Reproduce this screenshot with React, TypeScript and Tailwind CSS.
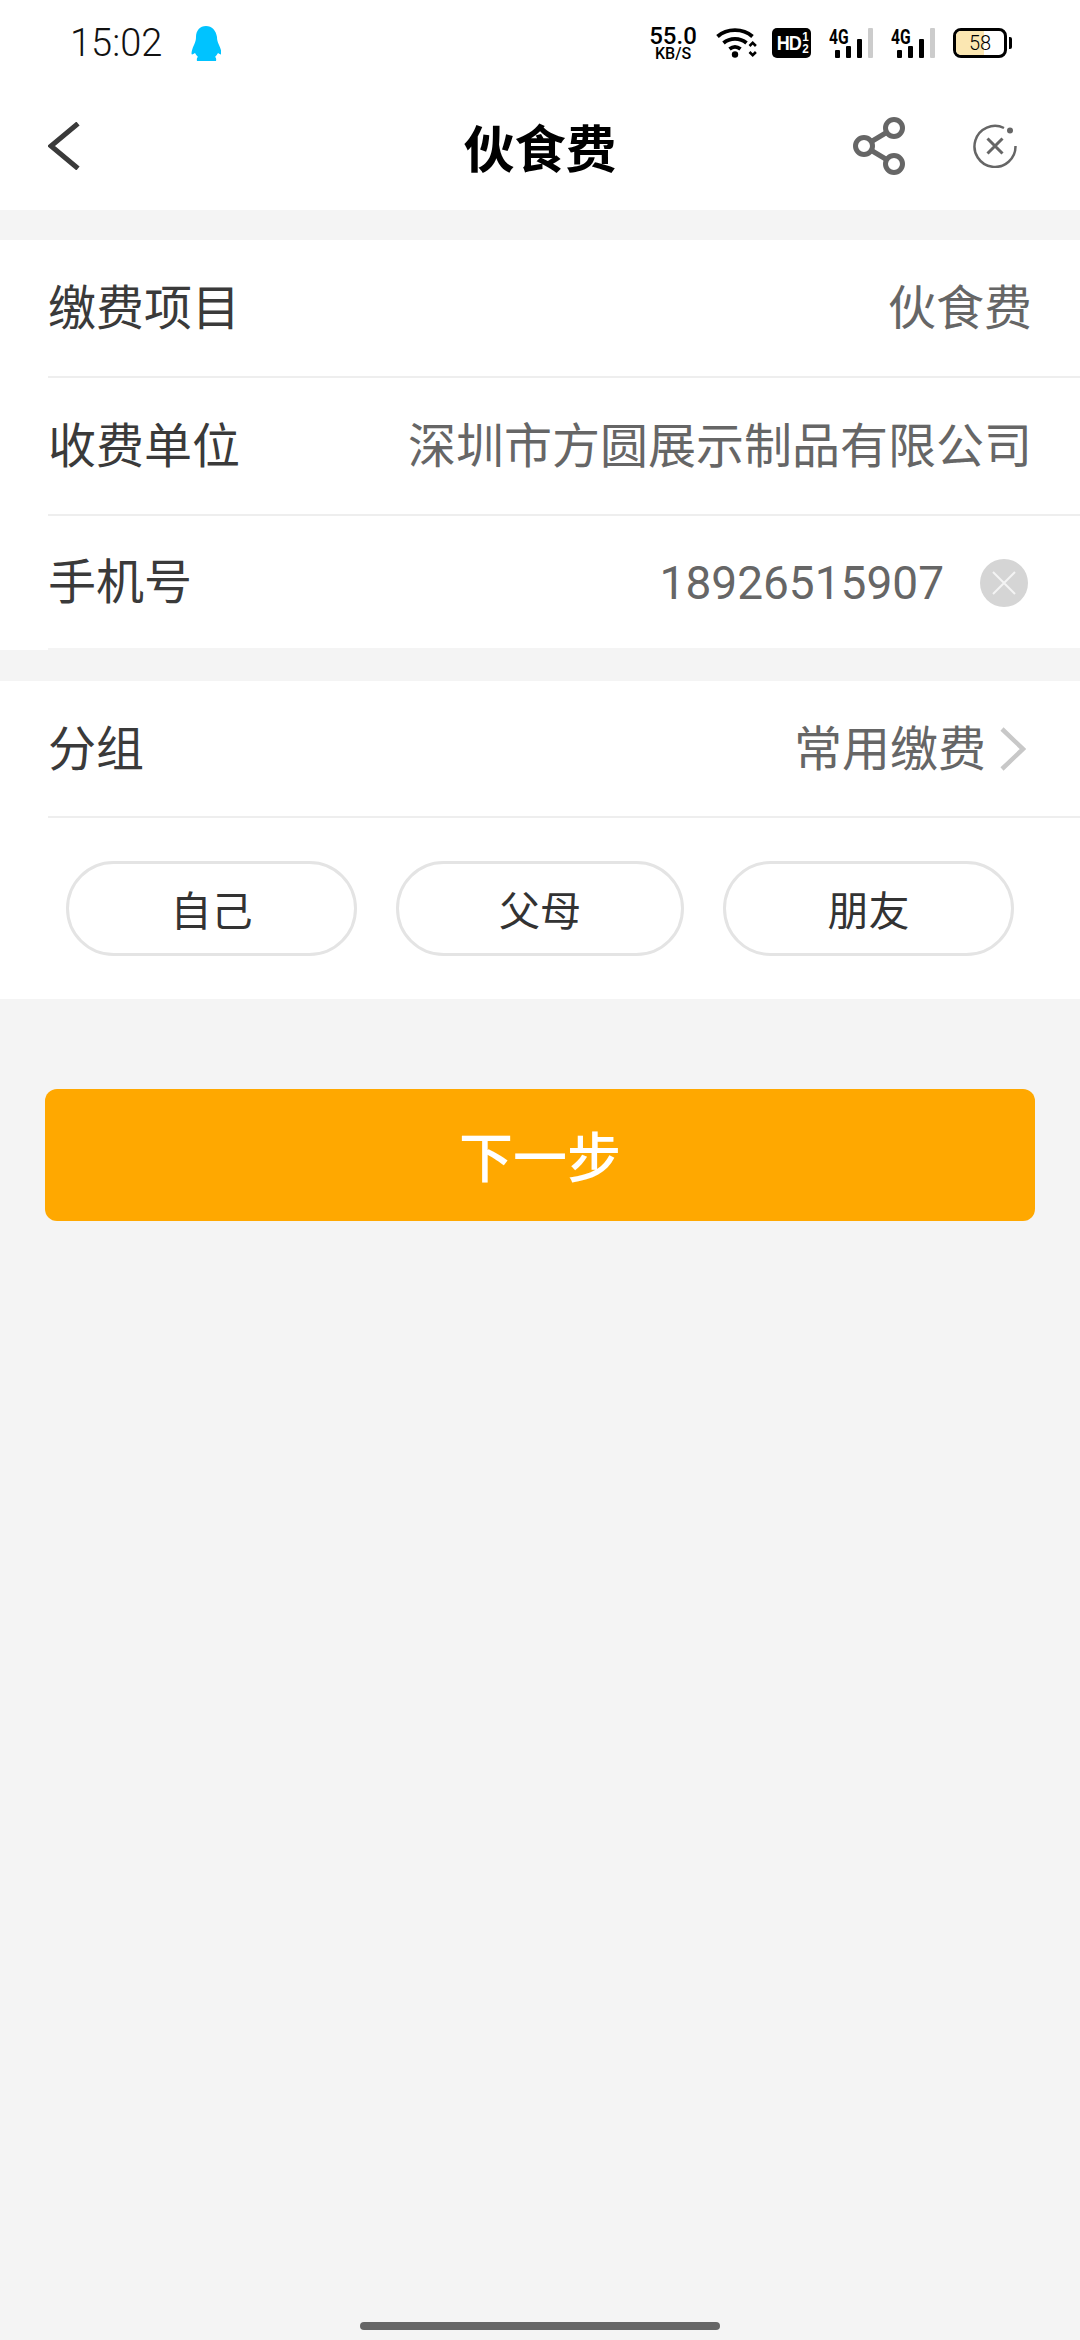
import React from 'react';

const FONT = "font-['Noto_Sans_CJK_SC','Noto_Sans',sans-serif]";

const Penguin = () => (
  <svg width="30" height="35" viewBox="0 0 30 35" fill="#00c3ff">
    <path d="M15 0C9 0 5 4.500 5 11c0 3-.5 4.500-2 8-1.500 3-2.500 6.500-2.500 8.500 0 1.500 1.500 1 3.500-.5.7 1.500 1.700 2.800 3 4-1 .5-1.500 2-1 4h19c.5-2 0-3.500-1-4 1.300-1.200 2.300-2.500 3-4 2 1.500 3.500 2 3.500.5 0-2-1-5.500-2.500-8.500-1.500-3.500-2-5-2-8C25 4.500 21 0 15 0z" />
  </svg>
);

const Wifi = () => (
  <svg width="42" height="32" viewBox="0 0 42 32" fill="none" stroke="#000" strokeWidth="3.800">
    <path d="M1.500 9.500C11 1 27 1 36.500 9.500" />
    <path d="M7.500 16C14 10.500 24 10.500 30.500 16" />
    <path d="M13.500 22c3.500-2.700 7.500-2.700 11 0" />
    <circle cx="19" cy="27.500" r="3.200" fill="#000" stroke="none" />
    <path d="M33.500 19l3.200-3.200 3.200 3.200M33.500 25l3.200 3.200 3.200-3.200" strokeWidth="2.600" />
  </svg>
);

const Signal = () => (
  <div className="relative w-[44px] h-[30px]">
    <span className="absolute left-0 top-[-1px] text-[20px] leading-[20px] font-bold text-black font-['Roboto',sans-serif] scale-x-[0.78] origin-left">4G</span>
    <div className="absolute left-[6px] bottom-0 flex items-end gap-[6px]">
      <div className="w-[5px] h-[8px] bg-black rounded-[1px]" />
      <div className="w-[5px] h-[12px] bg-black rounded-[1px]" />
      <div className="w-[5px] h-[19px] bg-black rounded-[1px]" />
      <div className="w-[5px] h-[30px] bg-[#cccccc] rounded-[1px]" />
    </div>
  </div>
);

const Row = ({ label, children, h = 'h-[136px]' }: { label: string; children: React.ReactNode; h?: string }) => (
  <div className={`flex items-center justify-between ${h} pl-[48px] pr-[48px] pb-[8px]`}>
    <span className="text-[48px] leading-none text-[#3a3a3a]">{label}</span>
    {children}
  </div>
);

const Divider = ({ className = 'bg-[#eeeeee]' }: { className?: string }) => (
  <div className={`ml-[48px] h-[2px] ${className}`} />
);

const App: React.FC = () => {
  return (
    <div className={`w-[1080px] h-[2340px] bg-[#f4f4f4] relative overflow-hidden ${FONT}`}>
      {/* status bar */}
      <div className="bg-white h-[84px] flex items-center pl-[70px] pr-[68px] pt-[2px]">
        <span className="text-[38px] leading-none text-[#111111] font-['Roboto',sans-serif] font-light">15:02</span>
        <div className="ml-[29px] flex"><Penguin /></div>
        <div className="ml-auto flex items-center">
          <div className="flex flex-col items-center w-[52px] font-['Roboto',sans-serif] font-medium text-black">
            <span className="text-[24px] leading-[22px]">55.0</span>
            <span className="text-[16px] leading-[14px]">KB/S</span>
          </div>
          <div className="ml-[17px] flex"><Wifi /></div>
          <div className="ml-[14px] w-[39px] h-[30px] bg-black rounded-[5px] flex items-center justify-center text-white font-bold font-['Liberation_Sans',sans-serif]">
            <span className="text-[20px] leading-none tracking-[-1px] scale-x-90 origin-right">HD</span>
            <span className="flex flex-col items-center text-[13px] leading-[12px] ml-[1px] scale-x-90"><span>1</span><span>2</span></span>
          </div>
          <div className="ml-[18px]"><Signal /></div>
          <div className="ml-[18px]"><Signal /></div>
          <div className="ml-[18px] flex items-center">
            <div className="w-[54px] h-[30px] border-[3px] border-black rounded-[8px] bg-white overflow-hidden relative">
              <div className="absolute inset-y-0 left-0 w-[58%] bg-[#fbe7b2]" />
              <span className="relative flex h-full items-center justify-center text-[20px] leading-none text-black font-['Roboto',sans-serif] font-light">58</span>
            </div>
            <div className="ml-[2px] w-[3px] h-[12px] bg-black rounded-r-[2px]" />
          </div>
        </div>
      </div>

      {/* nav bar */}
      <div className="bg-white h-[126px] grid grid-cols-[1fr_auto_1fr] items-center pb-[2px]">
        <div className="pl-[48px] flex">
          <svg width="32" height="48" viewBox="0 0 32 48" fill="none" stroke="#3a3a3a" strokeWidth="5">
            <path d="M30 1.500L3 24l27 22.500" />
          </svg>
        </div>
        <span className="text-[51px] leading-none font-bold text-black">伙食费</span>
        <div className="flex items-center justify-end pr-[63px] gap-[68px]">
          <svg width="52" height="58" viewBox="0 0 52 58" fill="none" stroke="#666666" strokeWidth="5">
            <circle cx="41" cy="11" r="8.500" />
            <circle cx="11" cy="29" r="8.500" />
            <circle cx="41" cy="47" r="8.500" />
            <path d="M18.500 24.500l15-9M18.500 33.500l15 9" />
          </svg>
          <svg width="44" height="44" viewBox="0 0 44 44" fill="none" stroke="#666666" strokeWidth="2.500">
            <path d="M31 4A20.500 20.500 0 1 0 42.500 22" />
            <circle cx="37" cy="6.500" r="3" fill="#666666" stroke="none" />
            <path d="M14.500 14.500l15 15M29.500 14.500l-15 15" strokeWidth="3" />
          </svg>
        </div>
      </div>

      <div className="mt-[30px] bg-white">
        <Row label="缴费项目">
          <span className="text-[48px] leading-none text-[#666666]">伙食费</span>
        </Row>
        <Divider />
        <Row label="收费单位">
          <span className="text-[48px] leading-none text-[#666666]">深圳市方圆展示制品有限公司</span>
        </Row>
        <Divider />
        <Row label="手机号" h="h-[132px]">
          <div className="flex items-center translate-y-[5px]">
            <span className="text-[46px] leading-none text-[#666666] font-['Roboto',sans-serif]">18926515907</span>
            <div className="ml-[36px] mr-[4px] w-[48px] h-[48px] rounded-full bg-[#d5d5d5] flex items-center justify-center">
              <svg width="26" height="26" viewBox="0 0 26 26" stroke="#f4f4f4" strokeWidth="2">
                <path d="M2 2l22 22M24 2L2 24" />
              </svg>
            </div>
          </div>
        </Row>
        <Divider className="bg-[#f4f4f4]" />
      </div>

      <div className="mt-[31px] bg-white pb-[43px]">
        <Row label="分组" h="h-[135px]">
          <div className="flex items-center">
            <span className="text-[48px] leading-none text-[#666666]">常用缴费</span>
            <svg className="ml-[14px] mr-[6px] translate-y-[4px]" width="26" height="44" viewBox="0 0 26 44" fill="none" stroke="#c8c8c8" strokeWidth="4.500">
              <path d="M2 2l21 20L2 42" />
            </svg>
          </div>
        </Row>
        <Divider />
        <div className="flex items-center pl-[66px] pt-[43px]">
          <div className="w-[291px] h-[95px] rounded-full border-[3px] border-[#e4e4e4] flex items-center justify-center text-[41px] leading-none text-[#333333]">自己</div>
          <div className="ml-[39px] w-[288px] h-[95px] rounded-full border-[3px] border-[#e4e4e4] flex items-center justify-center text-[41px] leading-none text-[#333333]">父母</div>
          <div className="ml-[39px] w-[291px] h-[95px] rounded-full border-[3px] border-[#e4e4e4] flex items-center justify-center text-[41px] leading-none text-[#333333]">朋友</div>
        </div>
      </div>

      <div className="mt-[90px] mx-[45px] h-[132px] rounded-[12px] bg-[#ffa800] flex items-center justify-center text-[54px] leading-none text-white font-medium">
        下一步
      </div>

      {/* home indicator */}
      <div className="absolute bottom-[10px] left-[360px] w-[360px] h-[8px] rounded-full bg-[#666666]" />
    </div>
  );
};

export default App;
